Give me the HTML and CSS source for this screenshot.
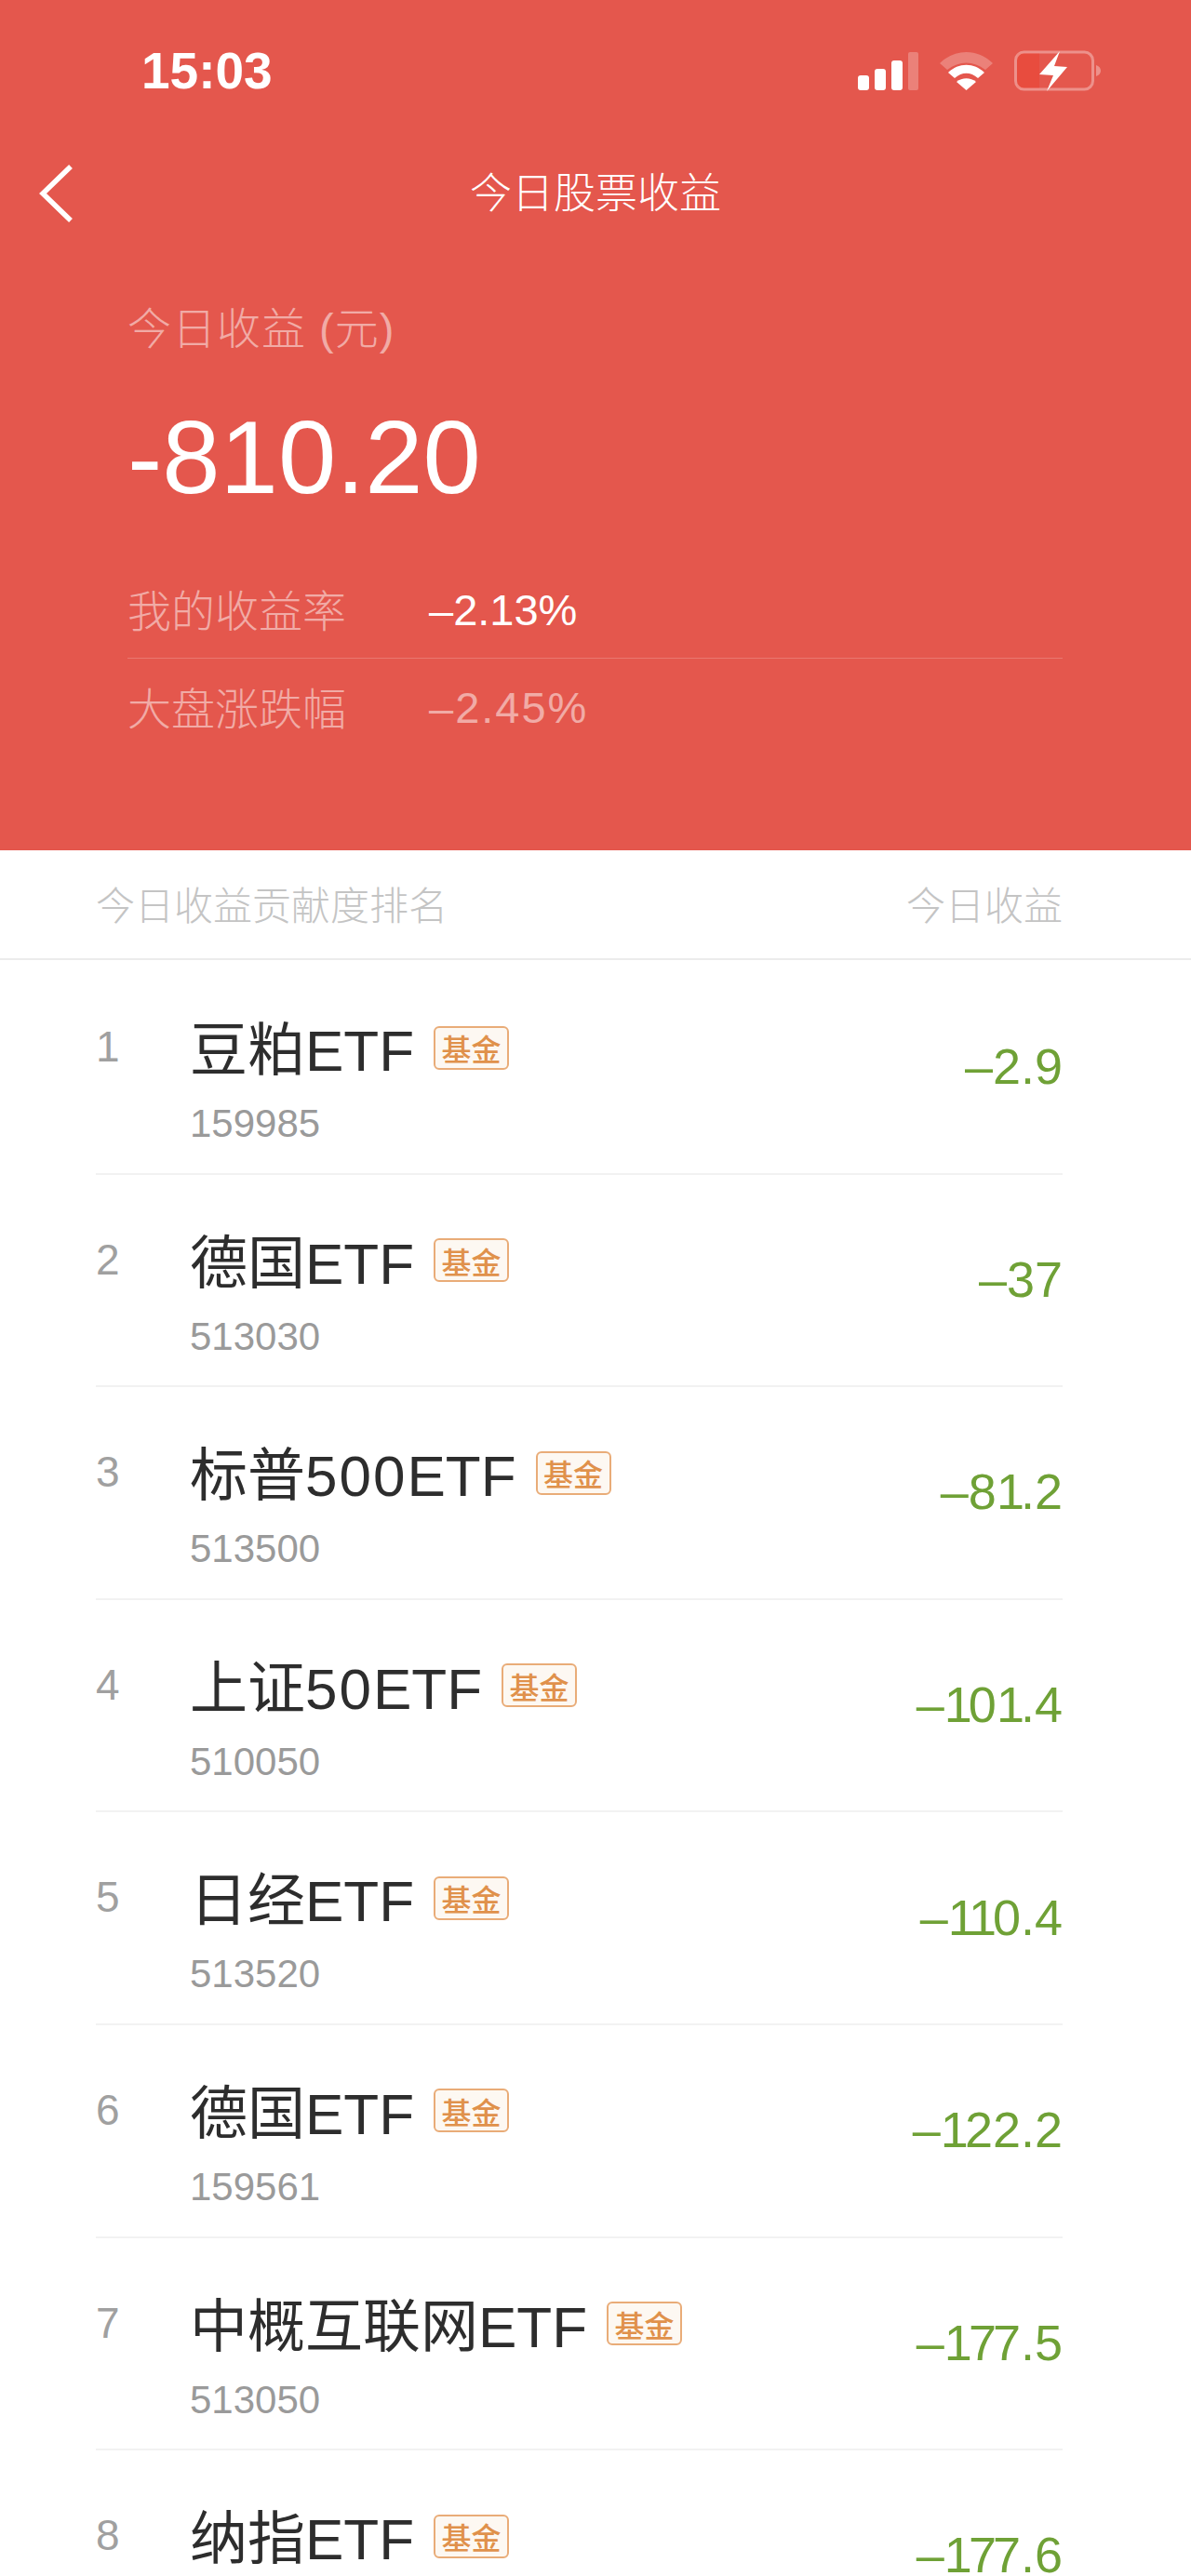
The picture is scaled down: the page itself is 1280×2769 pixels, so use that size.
FILE: index.html
```html
<!DOCTYPE html>
<html lang="zh-CN">
<head>
    <meta charset="UTF-8">
    <title>今日股票收益</title>
    <link rel="stylesheet" href="styles.css">
</head>
<body>

    <header class="hero">
        <div class="status-bar">
            <span class="status-time">15:03</span>
            <div class="status-icons">
                <svg class="icon-signal" width="65" height="41" viewBox="0 0 65 41">
                    <rect x="0" y="25" width="12" height="16" rx="3" fill="#fff"/>
                    <rect x="18" y="18" width="12" height="23" rx="3" fill="#fff"/>
                    <rect x="36" y="9" width="12" height="32" rx="3" fill="#fff"/>
                    <rect x="54" y="0" width="11" height="41" rx="2" fill="#fff" opacity="0.25"/>
                </svg>
                <svg class="icon-wifi" width="57" height="41" viewBox="0 0 57 41">
                    <path d="M0 12 C16 -4 41 -4 57 12 L49 19 C36 9 21 9 8 19 Z" fill="#fff" opacity="0.25"/>
                    <path d="M9 22 C20 11 37 11 48 22 L41 28 C33 21 24 21 16 28 Z" fill="#fff"/>
                    <path d="M18 32 C24 27 33 27 39 32 L28.500 41 Z" fill="#fff"/>
                </svg>
                <svg class="icon-battery" width="93" height="45" viewBox="0 0 93 45">
                    <rect x="3" y="3" width="24" height="38" fill="#e84c3e"/>
                    <rect x="1.500" y="2" width="83" height="40" rx="9" fill="none" stroke="#fff" stroke-width="3" opacity="0.35"/>
                    <path d="M88 16 C91 17 93 19 93 22 C93 25 91 27 88 28 Z" fill="#fff" opacity="0.35"/>
                    <path d="M49 1 L27 26 L42 27 L35 44 L57 18 L43 17 Z" fill="#fff"/>
                </svg>
            </div>
        </div>

        <nav class="nav-bar">
            <svg class="nav-back" width="40" height="62" viewBox="0 0 40 62">
                <path d="M36 2 L6 31 L36 60" fill="none" stroke="#fff" stroke-width="5.500"/>
            </svg>
            <h1 class="nav-title">今日股票收益</h1>
        </nav>

        <div class="summary">
            <p class="summary-label">今日收益 (元)</p>
            <p class="summary-amount">-810.20</p>
            <div class="summary-row">
                <span class="summary-name">我的收益率</span>
                <span class="summary-value">–2.13%</span>
            </div>
            <div class="summary-row summary-row-dim">
                <span class="summary-name">大盘涨跌幅</span>
                <span class="summary-value">–2.45%</span>
            </div>
        </div>
    </header>

    <div class="list-head">
        <span>今日收益贡献度排名</span>
        <span>今日收益</span>
    </div>

    <ul class="rank-list">
        <li class="rank-item">
            <span class="rank-no">1</span>
            <div class="rank-main">
                <div class="rank-title"><span class="rank-name">豆粕ETF</span><span class="tag">基金</span></div>
                <div class="rank-code">159985</div>
            </div>
            <span class="rank-value">–2.9</span>
        </li>
        <li class="rank-item">
            <span class="rank-no">2</span>
            <div class="rank-main">
                <div class="rank-title"><span class="rank-name">德国ETF</span><span class="tag">基金</span></div>
                <div class="rank-code">513030</div>
            </div>
            <span class="rank-value">–37</span>
        </li>
        <li class="rank-item">
            <span class="rank-no">3</span>
            <div class="rank-main">
                <div class="rank-title"><span class="rank-name">标普<span class="digits">500</span>ETF</span><span class="tag">基金</span></div>
                <div class="rank-code">513500</div>
            </div>
            <span class="rank-value">–8<span class="tight">1</span>.2</span>
        </li>
        <li class="rank-item">
            <span class="rank-no">4</span>
            <div class="rank-main">
                <div class="rank-title"><span class="rank-name">上证<span class="digits">50</span>ETF</span><span class="tag">基金</span></div>
                <div class="rank-code">510050</div>
            </div>
            <span class="rank-value">–<span class="tight">1</span>0<span class="tight">1</span>.4</span>
        </li>
        <li class="rank-item">
            <span class="rank-no">5</span>
            <div class="rank-main">
                <div class="rank-title"><span class="rank-name">日经ETF</span><span class="tag">基金</span></div>
                <div class="rank-code">513520</div>
            </div>
            <span class="rank-value">–<span class="tight">1</span><span class="tight">1</span>0.4</span>
        </li>
        <li class="rank-item">
            <span class="rank-no">6</span>
            <div class="rank-main">
                <div class="rank-title"><span class="rank-name">德国ETF</span><span class="tag">基金</span></div>
                <div class="rank-code">159561</div>
            </div>
            <span class="rank-value">–<span class="tight">1</span>22.2</span>
        </li>
        <li class="rank-item">
            <span class="rank-no">7</span>
            <div class="rank-main">
                <div class="rank-title"><span class="rank-name">中概互联网ETF</span><span class="tag">基金</span></div>
                <div class="rank-code">513050</div>
            </div>
            <span class="rank-value">–<span class="tight">1</span><span class="tight">7</span>7.5</span>
        </li>
        <li class="rank-item">
            <span class="rank-no">8</span>
            <div class="rank-main">
                <div class="rank-title"><span class="rank-name">纳指ETF</span><span class="tag">基金</span></div>
            </div>
            <span class="rank-value">–<span class="tight">1</span><span class="tight">7</span>7.6</span>
        </li>
    </ul>

</body>
</html>
```
FILE: styles.css
```css
html, body {
    margin: 0;
    height: 2769px;
    overflow: hidden;
    background: #fff;
}

body {
    font-family: "Liberation Sans", "Noto Sans CJK SC", sans-serif;
}

p, h1, ul {
    margin: 0;
    padding: 0;
}

/* Red top block */
.hero {
    height: 914px;
    background: #e4574d;
    color: #fff;
    box-sizing: border-box;
}

.status-bar {
    height: 150px;
    box-sizing: border-box;
    padding: 48px 97px 0 152px;
    display: flex;
    justify-content: space-between;
    align-items: flex-start;
}

.status-time {
    font-size: 55px;
    line-height: 56px;
    font-weight: bold;
}

.status-icons {
    display: flex;
    align-items: center;
    gap: 23px;
    height: 56px;
}

.nav-bar {
    height: 116px;
    padding-top: 2px;
    box-sizing: border-box;
    display: flex;
    align-items: center;
    justify-content: center;
    position: relative;
}

.nav-back {
    position: absolute;
    left: 40px;
    top: 27px;
}

.nav-title {
    font-size: 45px;
    line-height: 56px;
    font-weight: 300;
}

.summary {
    padding: 0 138px 0 137px;
}

.summary-label {
    margin-top: 58px;
    font-size: 47px;
    line-height: 60px;
    font-weight: 300;
    letter-spacing: 1px;
    color: rgba(255, 255, 255, 0.5);
}

.summary-amount {
    margin-top: 43px;
    margin-bottom: 46px;
    font-size: 112px;
    line-height: 130px;
}

.summary-row {
    display: flex;
    align-items: center;
    height: 105px;
    box-sizing: border-box;
    font-size: 47px;
    border-bottom: 1px solid rgba(255, 255, 255, 0.2);
}

.summary-row-dim {
    border-bottom: none;
}

.summary-row-dim .summary-value {
    letter-spacing: 2px;
    color: rgba(255, 255, 255, 0.5);
}

.summary-name {
    width: 324px;
    margin-bottom: 4px;
    font-weight: 300;
    color: rgba(255, 255, 255, 0.5);
}

/* List */
.list-head {
    height: 118px;
    box-sizing: border-box;
    padding: 0 138px 4px 103px;
    display: flex;
    justify-content: space-between;
    align-items: center;
    font-size: 42px;
    font-weight: 300;
    color: #c4c4c4;
    border-bottom: 2px solid #ececec;
}

.rank-list {
    list-style: none;
    margin: 0 138px 0 103px;
    padding-top: 2px;
}

.rank-item {
    height: 228.6px;
    box-sizing: border-box;
    display: flex;
    align-items: center;
    border-bottom: 2px solid #f2f2f2;
}

.rank-no {
    width: 101px;
    flex-shrink: 0;
    align-self: flex-start;
    padding-top: 61px;
    font-size: 46px;
    line-height: 60px;
    color: #a0a0a0;
}

.rank-main {
    flex: 1;
    align-self: flex-start;
    padding-top: 61px;
}

.rank-title {
    display: flex;
    align-items: center;
    height: 70px;
}

.rank-name {
    font-size: 62px;
    line-height: 70px;
    color: #2d2d2d;
}

.digits {
    letter-spacing: 2px;
}

.tag {
    margin-left: 21px;
    margin-bottom: 8px;
    width: 81px;
    height: 47px;
    box-sizing: border-box;
    display: flex;
    align-items: center;
    justify-content: center;
    font-size: 32px;
    font-weight: 500;
    color: #e0914b;
    background: #fdf8f2;
    border: 2px solid #e9ac78;
    border-radius: 6px;
}

.rank-code {
    margin-top: 19px;
    font-size: 42px;
    line-height: 48px;
    color: #9a9a9a;
}

.rank-value {
    padding-bottom: 2px;
    font-size: 54px;
    color: #6fa136;
}

.tight {
    letter-spacing: -4px;
}
```
